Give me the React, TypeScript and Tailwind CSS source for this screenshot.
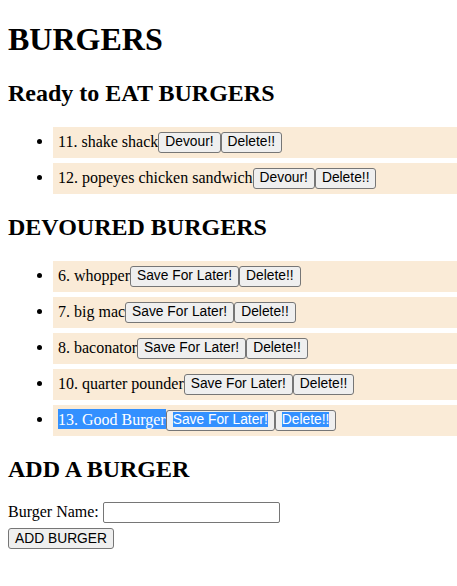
import React from 'react';

type Burger = { id: number; name: string; selected?: boolean };

const ready: Burger[] = [
  { id: 11, name: 'shake shack' },
  { id: 12, name: 'popeyes chicken sandwich' },
];

const devoured: Burger[] = [
  { id: 6, name: 'whopper' },
  { id: 7, name: 'big mac' },
  { id: 8, name: 'baconator' },
  { id: 10, name: 'quarter pounder' },
  { id: 13, name: 'Good Burger', selected: true },
];

// plain browser-default looking button
const Btn = ({ label, selected }: { label: string; selected?: boolean }) => (
  <button className="inline-block align-baseline h-[21px] px-[6px] py-0 leading-[16px] text-[13.8px] font-['Liberation_Sans',Arial,sans-serif] text-black bg-[#efefef] border border-[#767676] rounded-[3px]">
    {selected ? <span className="bg-[#3390ff] text-white">{label}</span> : label}
  </button>
);

const BurgerRow = ({ burger, action }: { burger: Burger; action: string }) => (
  <li className="my-[5px] ml-[5px] p-[5px] bg-[#faebd7]">
    {burger.selected ? (
      <span className="bg-[#3390ff] text-white py-[1.5px]">
        {burger.id}. {burger.name}
      </span>
    ) : (
      <>
        {burger.id}. {burger.name}
      </>
    )}
    <Btn label={action} selected={burger.selected} />
    <Btn label="Delete!!" selected={burger.selected} />
  </li>
);

export default function App() {
  return (
    <div className="pl-2 text-black bg-white leading-[normal] text-[16px] font-['Liberation_Serif','Times_New_Roman',serif] min-h-[586px]">
      <h1 className="text-[32px] font-bold my-[21.44px]">BURGERS</h1>

      <h2 className="text-[24px] font-bold my-[19.92px]">Ready to EAT BURGERS</h2>
      <ul className="list-disc pl-10 my-4">
        {ready.map((b) => (
          <BurgerRow key={b.id} burger={b} action="Devour!" />
        ))}
      </ul>

      <h2 className="text-[24px] font-bold my-[19.92px]">DEVOURED BURGERS</h2>
      <ul className="list-disc pl-10 my-4">
        {devoured.map((b) => (
          <BurgerRow key={b.id} burger={b} action="Save For Later!" />
        ))}
      </ul>

      <h2 className="text-[24px] font-bold my-[19.92px]">ADD A BURGER</h2>
      <form onSubmit={(e) => e.preventDefault()}>
        <label>Burger Name: </label>
        <input
          type="text"
          className="inline-block align-baseline w-[177px] h-[21px] px-[2px] text-[13.333px] font-['Liberation_Sans',Arial,sans-serif] bg-white border border-[#767676] rounded-[2px]"
        />
        <br />
        <button className="mt-[5px] h-[21px] px-[6px] leading-[16px] text-[13.8px] font-['Liberation_Sans',Arial,sans-serif] text-black bg-[#efefef] border border-[#767676] rounded-[3px]">
          ADD BURGER
        </button>
      </form>
    </div>
  );
}
